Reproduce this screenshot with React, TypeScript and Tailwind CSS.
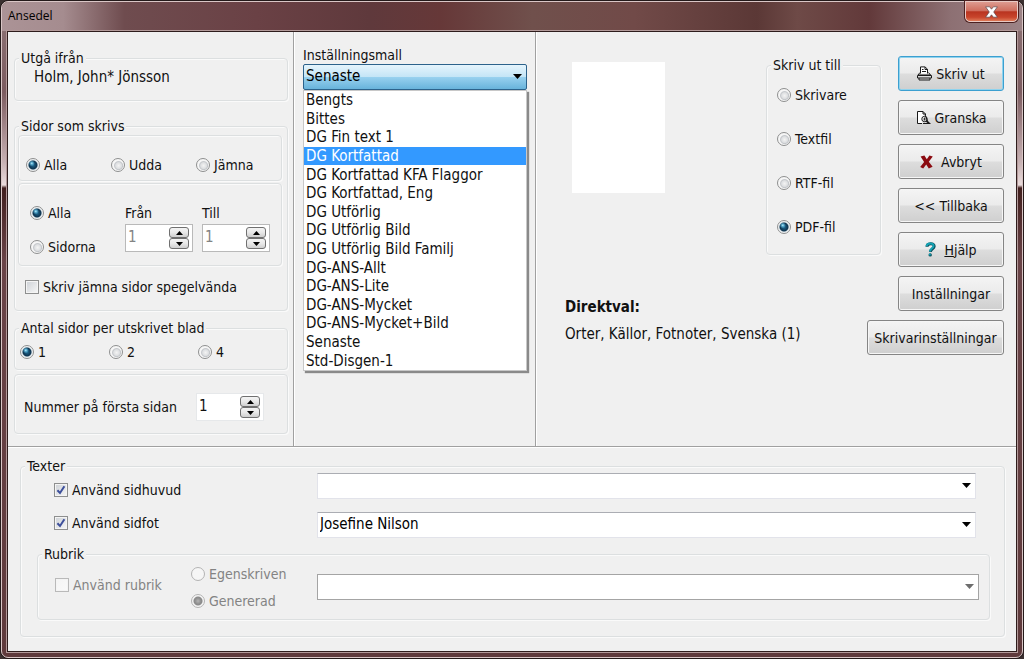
import React from "react";
import type { ReactNode } from "react";

const templates = [
  "Bengts",
  "Bittes",
  "DG Fin text 1",
  "DG Kortfattad",
  "DG Kortfattad KFA Flaggor",
  "DG Kortfattad, Eng",
  "DG Utförlig",
  "DG Utförlig Bild",
  "DG Utförlig Bild Familj",
  "DG-ANS-Allt",
  "DG-ANS-Lite",
  "DG-ANS-Mycket",
  "DG-ANS-Mycket+Bild",
  "Senaste",
  "Std-Disgen-1",
];

function Group({ legend, className = "", body = "", children }: { legend?: string; className?: string; body?: string; children: ReactNode }) {
  return (
    <fieldset className={`min-w-0 rounded-sm border border-[#dcdfe0] shadow-[inset_1px_1px_0_#fafafa,1px_1px_0_#fafafa] ${className}`}>
      {legend && <legend className="ml-1 bg-[#f0f0f0] px-0.5 leading-[18px]">{legend}</legend>}
      <div className={body}>{children}</div>
    </fieldset>
  );
}

function Radio({ name, label, checked, disabled }: { name: string; label: string; checked?: boolean; disabled?: boolean }) {
  return (
    <label className={`flex items-center gap-1 leading-[18px] ${disabled ? "text-[#838383]" : ""}`}>
      <input
        type="radio"
        name={name}
        defaultChecked={checked}
        disabled={disabled}
        className="size-3.5 shrink-0 appearance-none rounded-full border border-[#8e8f8f] bg-[radial-gradient(circle_at_55%_55%,#f4f4f4_0,#dddfe1_3px,#c3c6ca_4px,#f6f6f6_5px)] checked:bg-[radial-gradient(circle_at_40%_36%,#c6edf8_0,#5fb4d6_1px,transparent_3px),radial-gradient(circle_at_50%_50%,#1f6d96_0,#12405f_3px,#0f3550_4px,#dfe7eb_5px,#f8f8f8_6px)] disabled:border-[#b4b4b4] disabled:bg-[#f6f6f6] disabled:bg-none disabled:checked:bg-[radial-gradient(circle_at_50%_50%,#b4b4b4_0,#8e8e8e_3px,#8a8a8a_4px,#f4f4f4_5px)]"
      />
      {label}
    </label>
  );
}

function Check({ label, checked, disabled }: { label: string; checked?: boolean; disabled?: boolean }) {
  return (
    <label className={`flex items-center gap-1 leading-[18px] ${disabled ? "text-[#838383]" : ""}`}>
      <span className="relative flex size-3.5 shrink-0">
        <input
          type="checkbox"
          defaultChecked={checked}
          disabled={disabled}
          className="peer size-3.5 appearance-none border border-[#8e8f8f] bg-linear-to-br from-[#cdd1d6] to-[#f7f7f7] shadow-[inset_0_0_0_1px_#f4f4f4] disabled:border-[#b9b9b9] disabled:from-[#f4f4f4] disabled:to-[#fafafa]"
        />
        <svg viewBox="0 0 14 14" className="pointer-events-none absolute inset-0 hidden peer-checked:block" aria-hidden="true">
          <path d="M3.4 7.2 L6 10 L10.4 3.2" fill="none" stroke="#3d4f9b" strokeWidth="2" />
        </svg>
      </span>
      {label}
    </label>
  );
}

function StepButton({ up, label }: { up?: boolean; label: string }) {
  return (
    <button
      type="button"
      aria-label={label}
      className="flex h-[11px] w-5 items-center justify-center rounded-[3px] border border-[#707070] bg-linear-to-b from-[#f4f4f4] via-[#e8e8e8] to-[#cfcfcf]"
    >
      <svg viewBox="0 0 7 4" className="h-1 w-[7px]" aria-hidden="true">
        <path d={up ? "M0 4 L3.5 0 L7 4 Z" : "M0 0 L3.5 4 L7 0 Z"} fill="#000" />
      </svg>
    </button>
  );
}

function Spin({ id, disabled }: { id: string; disabled?: boolean }) {
  return (
    <div className={`flex h-7 w-[68px] items-center border bg-white pr-[3px] ${disabled ? "border-[#b9b9b9]" : "border-[#e6e8ea]"}`}>
      <input
        id={id}
        type="text"
        defaultValue="1"
        disabled={disabled}
        className="h-full min-w-0 flex-1 bg-transparent pb-0.5 pl-0.5 text-[15px] disabled:text-[#838383]"
      />
      <div className="flex flex-col">
        <StepButton up label="Öka" />
        <StepButton label="Minska" />
      </div>
    </div>
  );
}

function Arrow({ className }: { className: string }) {
  return (
    <svg viewBox="0 0 9 5" className={`pointer-events-none absolute h-[5px] w-[9px] ${className}`} aria-hidden="true">
      <path d="M0 0 H9 L4.5 5 Z" fill="currentColor" />
    </svg>
  );
}

function Combo({ label, value = "", disabled }: { label: string; value?: string; disabled?: boolean }) {
  return (
    <div className="relative">
      <select
        aria-label={label}
        defaultValue={value}
        disabled={disabled}
        className="block h-[26px] w-full appearance-none border border-[#e2e3ea] border-t-[#abadb3] bg-white px-0.5 text-[15px] text-black disabled:border-[#a4a4a4] disabled:opacity-100"
      >
        <option value={value}>{value}</option>
      </select>
      <Arrow className={disabled ? "top-2.5 right-[5px] text-[#6d6d6d]" : "top-2.5 right-[5px] text-black"} />
    </div>
  );
}

function Command({ children, primary, wide }: { children: ReactNode; primary?: boolean; wide?: boolean }) {
  return (
    <button
      type="button"
      className={`flex h-[35px] shrink-0 items-center justify-center gap-1 rounded-[3px] border bg-[linear-gradient(#f4f4f4_0,#ebebeb_49%,#dddddd_51%,#cfcfcf_100%)] whitespace-nowrap ${
        primary ? "border-[#3c9fd0] shadow-[inset_0_0_0_1px_#8fd3ee]" : "border-[#858585] shadow-[inset_0_0_0_1px_#f6f6f6]"
      } ${wide ? "w-[137px]" : "w-[106px]"}`}
    >
      {children}
    </button>
  );
}

function PrinterIcon() {
  return (
    <svg viewBox="0 0 15 15" className="size-[15px]" fill="none" stroke="#1a1a1a" aria-hidden="true">
      <path d="M3.5 7.5 V0.9 H8 L10.5 3.2 V7.5" fill="#fff" />
      <path d="M8 1 V3.5 H10.5 M5 3.5 H6.5 M5 5.5 H9" />
      <path d="M3 6.5 L1 9 H13.5 L11.5 6.5 M0.5 9.5 H14.5 V12 H0.5 Z M2 12 V14 H13 V12" />
    </svg>
  );
}

function PreviewIcon() {
  return (
    <svg viewBox="0 0 15 15" className="size-[15px]" fill="none" stroke="#1a1a1a" aria-hidden="true">
      <path d="M6 13.5 H1.5 V1.5 H7 L9.5 4 V5" fill="#fff" />
      <path d="M7 1.5 V4 H9.5" />
      <path d="M9 4.5 L12 12.5 M7 13.5 H14.5" />
      <circle cx="8.5" cy="9" r="2.7" />
      <path d="M10.3 10.8 L13.2 13.4" strokeWidth="1.8" />
      <path d="M8.5 7.5 V10.5 M7.3 9 H9.8" strokeWidth="0.8" />
    </svg>
  );
}

function CrossIcon() {
  return (
    <svg viewBox="0 0 13 14" className="h-3.5 w-[13px]" aria-hidden="true">
      <path d="M0.6 1.6 L4.4 0.6 L6.8 4.2 L9.4 0.6 L12.8 1.6 L8.8 6.8 L12.6 11.8 L8.8 13.4 L6.2 9.6 L3.2 13.4 L0.2 12 L4.1 6.9 Z" fill="#8b0a10" />
    </svg>
  );
}

function HelpIcon() {
  return (
    <svg viewBox="0 0 11 15" className="h-[15px] w-[11px]" fill="none" aria-hidden="true">
      <path d="M2 4.8 C2 0.9 9.2 0.7 9.2 4.3 C9.2 6.8 5.6 7 5.4 9.8" stroke="#0b4f5c" strokeWidth="3" />
      <path d="M1.6 4.3 C1.8 0.6 8.6 0.4 8.6 3.8 C8.6 6.4 5 6.6 4.9 9.4" stroke="#14a3b4" strokeWidth="2" />
      <circle cx="5.2" cy="12.9" r="1.7" fill="#0b4f5c" />
      <circle cx="4.9" cy="12.6" r="1" fill="#14a3b4" />
    </svg>
  );
}

function TitleBar() {
  return (
    <header className="-mx-[5px] flex h-[29px] items-start justify-between rounded-t-md bg-[linear-gradient(to_right,#ab9396_0,#a58c8f_6%,#6f4c4f_12%,#6a4145_25%,#5f393c_36%,#663838_43%,#70504c_52%,#714a48_62%,#5b3836_74%,#6e4a47_78%,#62393a_85%,#8d7073_93%,#9c8386_100%)] pl-1.5">
      <h1 className="pt-[5px] font-['Open_Sans','Noto_Sans',sans-serif] text-xs leading-[18px] text-black">Ansedel</h1>
      <button
        type="button"
        aria-label="Stäng"
        className="-mt-px mr-1 flex h-[21px] w-[53px] items-center justify-center rounded-b-[5px] border border-[#e9c9c3] bg-[linear-gradient(#dd9a8f_0,#cf6f5f_45%,#b93420_52%,#c8452c_80%,#dd7a58_100%)] shadow-[0_0_0_1px_#4b2020]"
      >
        <svg viewBox="0 0 13 12" className="h-3 w-[13px]" aria-hidden="true">
          <path
            d="M0.6 0.8 H4.6 L6.5 3.2 L8.4 0.8 H12.4 L8.7 6 L12.4 11.2 H8.4 L6.5 8.8 L4.6 11.2 H0.6 L4.3 6 Z"
            fill="#fff"
            stroke="#5a4a50"
            strokeWidth="0.7"
          />
        </svg>
      </button>
    </header>
  );
}

function PagesColumn() {
  return (
    <section className="w-[286px] shrink-0 border-r border-[#a0a0a0] pt-[17px] pr-[5px] pb-3 pl-1.5 shadow-[1px_0_0_#fff]">
      <Group legend="Utgå ifrån" body="pb-[13px]">
        <p className="pl-[19px] text-[15px] leading-5">Holm, John* Jönsson</p>
      </Group>

      <Group legend="Sidor som skrivs" className="mt-4" body="pr-[5px] pb-3.5 pl-[3px]">
        <Group body="grid grid-cols-[85px_85px_1fr] pt-5 pb-1.5 pl-[7px]">
          <Radio name="parity" label="Alla" checked />
          <Radio name="parity" label="Udda" />
          <Radio name="parity" label="Jämna" />
        </Group>
        <Group className="mt-0.5" body="grid grid-cols-[95px_77px_1fr] pt-5 pb-[9px] pl-[11px]">
          <div className="flex flex-col gap-4">
            <Radio name="range" label="Alla" checked />
            <Radio name="range" label="Sidorna" />
          </div>
          <div className="flex flex-col gap-0.5">
            <label htmlFor="from" className="leading-[18px]">Från</label>
            <Spin id="from" disabled />
          </div>
          <div className="flex flex-col gap-0.5">
            <label htmlFor="to" className="leading-[18px]">Till</label>
            <Spin id="to" disabled />
          </div>
        </Group>
        <div className="pt-3 pl-[7px]">
          <Check label="Skriv jämna sidor spegelvända" />
        </div>
      </Group>

      <Group legend="Antal sidor per utskrivet blad" className="mt-2" body="grid grid-cols-[89px_89px_1fr] pt-1.5 pb-2 pl-[5px]">
        <Radio name="per" label="1" checked />
        <Radio name="per" label="2" />
        <Radio name="per" label="4" />
      </Group>

      <Group className="mt-1" body="flex items-center gap-3 pt-[18px] pb-3 pl-[9px]">
        <label htmlFor="first" className="w-40 whitespace-nowrap">Nummer på första sidan</label>
        <Spin id="first" />
      </Group>
    </section>
  );
}

function TemplateColumn() {
  return (
    <section className="w-[242px] shrink-0 border-r border-[#a0a0a0] pt-3.5 pr-2 pl-[9px] shadow-[1px_0_0_#fff]">
      <label htmlFor="template" className="block leading-[18px]">Inställningsmall</label>
      <div className="relative">
        <select
          id="template"
          defaultValue="Senaste"
          className="block h-[26px] w-full appearance-none rounded-xs border border-[#2c628b] bg-[linear-gradient(#e5f4fc_0,#c4e5f6_49%,#98d1ef_51%,#68b3db_100%)] px-0.5 text-[15px] text-black"
        >
          {templates.map((t) => (
            <option key={t}>{t}</option>
          ))}
        </select>
        <Arrow className="top-2.5 right-[5px] text-black" />
        <ul
          role="listbox"
          aria-label="Inställningsmall"
          className="absolute top-full left-0 z-10 grid h-[281px] w-full auto-rows-fr border border-[#c8c8c8] bg-white shadow-[2px_2px_1px_#8a8a8a]"
        >
          {templates.map((t) => (
            <li
              key={t}
              role="option"
              aria-selected={t === "DG Kortfattad"}
              className="flex items-center px-0.5 text-[15px] leading-[18px] aria-selected:bg-[#3399ff] aria-selected:text-white"
            >
              {t}
            </li>
          ))}
        </ul>
      </div>
    </section>
  );
}

function OutputColumn() {
  return (
    <section className="flex min-w-0 flex-1 justify-between pr-3 pl-[29px]">
      <div className="min-w-0 flex-1">
        <div className="flex justify-between pt-6">
          <div className="mt-1.5 ml-[7px] h-[131px] w-[93px] bg-white" />
          <Group legend="Skriv ut till" className="w-[115px]" body="flex flex-col gap-[26px] pt-3 pb-[18px] pl-2.5">
            <Radio name="target" label="Skrivare" />
            <Radio name="target" label="Textfil" />
            <Radio name="target" label="RTF-fil" />
            <Radio name="target" label="PDF-fil" checked />
          </Group>
        </div>
        <h2 className="pt-[43px] text-[15px] leading-[18px] font-bold">Direktval:</h2>
        <p className="pt-[9px] text-[15px] leading-[18px]">Orter, Källor, Fotnoter, Svenska (1)</p>
      </div>
      <div className="ml-[17px] flex w-[106px] shrink-0 flex-col items-end gap-[9px] pt-6">
        <Command primary>
          <PrinterIcon />
          Skriv ut
        </Command>
        <Command>
          <PreviewIcon />
          Granska
        </Command>
        <Command>
          <CrossIcon />
          <span className="pl-1">Avbryt</span>
        </Command>
        <Command>&lt;&lt; Tillbaka</Command>
        <Command>
          <HelpIcon />
          <span className="pl-1">
            <u>H</u>jälp
          </span>
        </Command>
        <Command>Inställningar</Command>
        <Command wide>Skrivarinställningar</Command>
      </div>
    </section>
  );
}

function TextsPanel() {
  return (
    <section className="flex-1 border-t border-[#a0a0a0] pt-2.5 pr-[11px] pb-3.5 pl-3 shadow-[inset_0_1px_0_#fff]">
      <Group legend="Texter" body="-mt-0.5 pr-3.5 pb-4 pl-4">
        <div className="flex">
          <div className="flex w-[280px] shrink-0 flex-col gap-[15px] pt-2 pl-[17px]">
            <Check label="Använd sidhuvud" checked />
            <Check label="Använd sidfot" checked />
          </div>
          <div className="flex min-w-0 flex-1 flex-col gap-[13px] pr-3.5 pb-[7px]">
            <Combo label="Sidhuvud" />
            <Combo label="Sidfot" value="Josefine Nilson" />
          </div>
        </div>
        <Group legend="Rubrik" body="flex items-center pr-2.5 pb-[9px]">
          <div className="w-[153px] shrink-0 pb-1 pl-[17px]">
            <Check label="Använd rubrik" disabled />
          </div>
          <div className="flex w-[126px] shrink-0 flex-col gap-[9px] pt-0.5">
            <Radio name="heading" label="Egenskriven" disabled />
            <Radio name="heading" label="Genererad" checked disabled />
          </div>
          <div className="min-w-0 flex-1">
            <Combo label="Rubriktext" disabled />
          </div>
        </Group>
      </Group>
    </section>
  );
}

export default function App() {
  return (
    <div className="flex min-h-screen bg-[#3a3030] font-['DejaVu_Sans_Condensed','DejaVu_Sans',sans-serif] text-sm text-[#111]">
      <div className="flex min-w-0 flex-1 rounded-lg border border-[#241a1a]">
        <main className="flex min-w-0 flex-1 flex-col rounded-[7px] border border-[#d9c6c6] bg-[linear-gradient(to_bottom,#8f7678_0,#7c5c60_90px,#c7b1b3_160px,#eadcdc_183px,#42201f_186px,#6a4448_260px,#5f3a3c_100%)] px-[5px] pb-[5px]">
          <TitleBar />
          <div className="flex flex-1 flex-col border border-[#2e1c1c] bg-[#f0f0f0] shadow-[0_0_0_1px_#b39a9a]">
            <div className="flex">
              <PagesColumn />
              <TemplateColumn />
              <OutputColumn />
            </div>
            <TextsPanel />
          </div>
        </main>
      </div>
    </div>
  );
}
